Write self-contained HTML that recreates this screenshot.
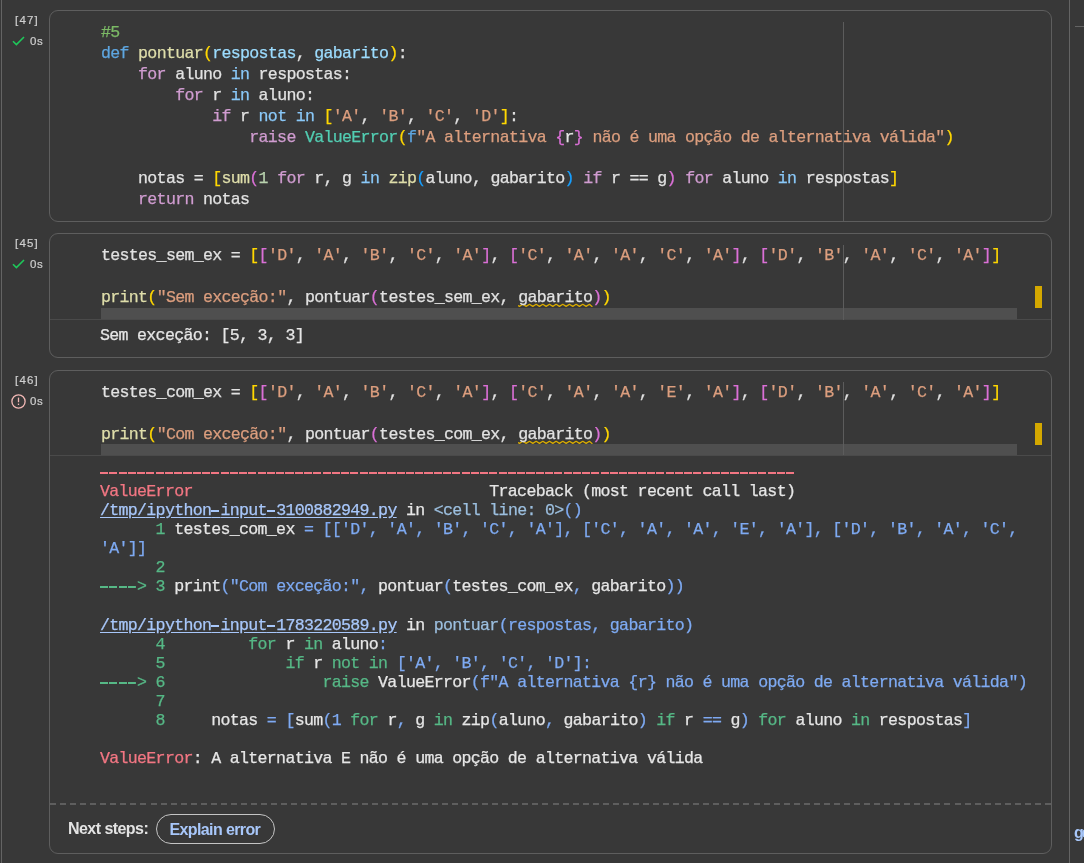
<!DOCTYPE html>
<html><head><meta charset="utf-8">
<style>
html,body{margin:0;padding:0}
body{width:1084px;height:863px;overflow:hidden;background:#383838;position:relative;font-family:"Liberation Sans",sans-serif}
.ab{position:absolute}
#root{position:absolute;left:0;top:0;width:1084px;height:863px;will-change:transform}
.vl{position:absolute;top:0;width:1px;height:863px;background:#646464}
.cell{position:absolute;left:49px;width:1001px;border:1px solid #5e5e5e;border-radius:9px;box-sizing:content-box}
.cnt{position:absolute;left:15px;font-size:11.5px;color:#cfcfcf;letter-spacing:1.2px;-webkit-text-stroke:0.2px currentColor}
.tm{position:absolute;left:30px;font-size:11.5px;color:#cfcfcf;letter-spacing:0.5px;-webkit-text-stroke:0.2px currentColor}
.code{position:absolute;left:101px;font-family:"Liberation Mono",monospace;font-size:16.6px;letter-spacing:-0.689px;line-height:20.97px;-webkit-text-stroke:0.25px currentColor;white-space:pre;color:#e2e2e2;z-index:2}
.out{position:absolute;left:100px;font-family:"Liberation Mono",monospace;font-size:16.6px;letter-spacing:-0.689px;line-height:19.06px;-webkit-text-stroke:0.25px currentColor;white-space:pre;color:#e6e6e6}
.ruler{position:absolute;left:843px;width:1px;background:#5c5c5c;z-index:3}
.sb{position:absolute;left:101px;width:916px;height:11px;background:#4f4f4f}
.mk{position:absolute;left:1035px;width:7px;background:#d4a800}
.sep{position:absolute;left:50px;width:1001px;height:1px;background:#4a4a4a}
/* code colors */
.k{color:#5ea6e0}.o{color:#8ac8f8}.p{color:#d09cd0}.f{color:#dfdeaa}.v{color:#9cdcfe}.c{color:#7cba66}.s{color:#dc9e7e}.t{color:#52cdb2}.n{color:#b9d3ae}
.b1{color:#ffd700}.b2{color:#da70d6}.b3{color:#179fff}
.sq{text-decoration:underline wavy #d4a800;text-decoration-thickness:1px;text-underline-offset:3px}
/* output colors */
.hy{color:transparent;-webkit-text-stroke:0;background-repeat:no-repeat;background-size:8.1px 2px;background-position:0 9px}.h4{background-size:35.9px 2px}
.hg{background-image:repeating-linear-gradient(90deg,#56b886 0 8.1px,transparent 8.1px 9.271px)}
.hb{background-image:repeating-linear-gradient(90deg,#a8c7fa 0 8.1px,transparent 8.1px 9.271px)}
.r{color:#f27683}.g{color:#56b886}.u{color:#a8c7fa;text-decoration:underline;text-underline-offset:2px}.bl{color:#7eaaf2}.cy{color:#9cbfdf}.w{color:#e3e3e3}
</style></head><body><div id="root">
<div class="vl" style="left:1px"></div>
<div class="vl" style="left:1069px"></div>
<div class="ab" style="left:1075px;top:26px;width:9px;height:1px;background:#646464"></div>

<!-- gutter -->
<div class="cnt" style="top:14px">[47]</div>
<svg class="ab" style="left:12px;top:36px" width="13" height="10" viewBox="0 0 13 10"><path d="M1 5.2 L4.4 8.6 L12 1" fill="none" stroke="#1ec85a" stroke-width="1.6"/></svg>
<div class="tm" style="top:35px">0s</div>

<div class="cnt" style="top:237px">[45]</div>
<svg class="ab" style="left:12px;top:259px" width="13" height="10" viewBox="0 0 13 10"><path d="M1 5.2 L4.4 8.6 L12 1" fill="none" stroke="#1ec85a" stroke-width="1.6"/></svg>
<div class="tm" style="top:258px">0s</div>

<div class="cnt" style="top:374px">[46]</div>
<svg class="ab" style="left:11px;top:394px" width="15" height="15" viewBox="0 0 15 15"><circle cx="7.5" cy="7.5" r="6.6" fill="none" stroke="#f2b8b5" stroke-width="1.3"/><rect x="6.85" y="3.6" width="1.3" height="4.6" fill="#f2b8b5"/><rect x="6.85" y="9.6" width="1.3" height="1.4" fill="#f2b8b5"/></svg>
<div class="tm" style="top:395px">0s</div>

<!-- cell 1 -->
<div class="cell" style="top:10px;height:210px"></div>
<div class="ruler" style="top:22px;height:199px"></div>
<div class="code" style="top:23px;line-height:20.9px"><span class="c">#5</span>
<span class="k">def</span> <span class="f">pontuar</span><span class="b1">(</span><span class="v">respostas</span>, <span class="v">gabarito</span><span class="b1">)</span>:
    <span class="p">for</span> aluno <span class="o">in</span> respostas:
        <span class="p">for</span> r <span class="o">in</span> aluno:
            <span class="p">if</span> r <span class="o">not</span> <span class="o">in</span> <span class="b1">[</span><span class="s">'A'</span>, <span class="s">'B'</span>, <span class="s">'C'</span>, <span class="s">'D'</span><span class="b1">]</span>:
                <span class="p">raise</span> <span class="t">ValueError</span><span class="b1">(</span><span class="k">f</span><span class="s">"A alternativa </span><span class="b2">{</span>r<span class="b2">}</span><span class="s"> não é uma opção de alternativa válida"</span><span class="b1">)</span>

    notas = <span class="b1">[</span><span class="f">sum</span><span class="b2">(</span><span class="n">1</span> <span class="p">for</span> r, g <span class="o">in</span> <span class="f">zip</span><span class="b3">(</span>aluno, gabarito<span class="b3">)</span> <span class="p">if</span> r == g<span class="b2">)</span> <span class="p">for</span> aluno <span class="o">in</span> respostas<span class="b1">]</span>
    <span class="p">return</span> notas</div>

<!-- cell 2 -->
<div class="cell" style="top:233px;height:123px"></div>
<div class="ruler" style="top:245px;height:75px"></div>
<div class="code" style="top:246px">testes_sem_ex = <span class="b1">[</span><span class="b2">[</span><span class="s">'D'</span>, <span class="s">'A'</span>, <span class="s">'B'</span>, <span class="s">'C'</span>, <span class="s">'A'</span><span class="b2">]</span>, <span class="b2">[</span><span class="s">'C'</span>, <span class="s">'A'</span>, <span class="s">'A'</span>, <span class="s">'C'</span>, <span class="s">'A'</span><span class="b2">]</span>, <span class="b2">[</span><span class="s">'D'</span>, <span class="s">'B'</span>, <span class="s">'A'</span>, <span class="s">'C'</span>, <span class="s">'A'</span><span class="b2">]</span><span class="b1">]</span>

<span class="f">print</span><span class="b1">(</span><span class="s">"Sem exceção:"</span>, pontuar<span class="b2">(</span>testes_sem_ex, gabarito<span class="b2">)</span><span class="b1">)</span></div>
<div class="sb" style="top:308px"></div>
<svg class="ab" style="left:518px;top:303px;z-index:1" width="75" height="5" viewBox="0 0 75 5"><path d="M0,2.6 L1.5,3.4 L4.83,1.3 L8.16,3.4 L11.49,1.3 L14.82,3.4 L18.15,1.3 L21.48,3.4 L24.81,1.3 L28.14,3.4 L31.47,1.3 L34.8,3.4 L38.13,1.3 L41.46,3.4 L44.79,1.3 L48.12,3.4 L51.45,1.3 L54.78,3.4 L58.11,1.3 L61.44,3.4 L64.77,1.3 L68.1,3.4 L71.43,1.3 L74,3.4" fill="none" stroke="#d9ab00" stroke-width="1.3" stroke-linejoin="round" stroke-linecap="round"/></svg>
<div class="mk" style="top:286px;height:22px"></div>
<div class="sep" style="top:319px"></div>
<div class="out" style="top:326px">Sem exceção: [5, 3, 3]</div>

<!-- cell 3 -->
<div class="cell" style="top:370px;height:482px"></div>
<div class="ruler" style="top:382px;height:73px"></div>
<div class="code" style="top:383px">testes_com_ex = <span class="b1">[</span><span class="b2">[</span><span class="s">'D'</span>, <span class="s">'A'</span>, <span class="s">'B'</span>, <span class="s">'C'</span>, <span class="s">'A'</span><span class="b2">]</span>, <span class="b2">[</span><span class="s">'C'</span>, <span class="s">'A'</span>, <span class="s">'A'</span>, <span class="s">'E'</span>, <span class="s">'A'</span><span class="b2">]</span>, <span class="b2">[</span><span class="s">'D'</span>, <span class="s">'B'</span>, <span class="s">'A'</span>, <span class="s">'C'</span>, <span class="s">'A'</span><span class="b2">]</span><span class="b1">]</span>

<span class="f">print</span><span class="b1">(</span><span class="s">"Com exceção:"</span>, pontuar<span class="b2">(</span>testes_com_ex, gabarito<span class="b2">)</span><span class="b1">)</span></div>
<div class="sb" style="top:444px"></div>
<svg class="ab" style="left:518px;top:440px;z-index:1" width="75" height="5" viewBox="0 0 75 5"><path d="M0,2.6 L1.5,3.4 L4.83,1.3 L8.16,3.4 L11.49,1.3 L14.82,3.4 L18.15,1.3 L21.48,3.4 L24.81,1.3 L28.14,3.4 L31.47,1.3 L34.8,3.4 L38.13,1.3 L41.46,3.4 L44.79,1.3 L48.12,3.4 L51.45,1.3 L54.78,3.4 L58.11,1.3 L61.44,3.4 L64.77,1.3 L68.1,3.4 L71.43,1.3 L74,3.4" fill="none" stroke="#d9ab00" stroke-width="1.3" stroke-linejoin="round" stroke-linecap="round"/></svg>
<div class="mk" style="top:423px;height:22px"></div>
<div class="sep" style="top:455px"></div>

<div class="ab" style="left:100px;top:472px;width:695px;height:2px;background:repeating-linear-gradient(90deg,#f27683 0 8.1px,transparent 8.1px 9.271px)"></div>
<div class="out" style="top:463px">
<span class="r">ValueError</span>                                Traceback (most recent call last)
<span class="u">/tmp/ipython<span class="hy hb">-</span>input<span class="hy hb">-</span>3100882949.py</span> in <span class="cy">&lt;cell line: 0&gt;</span><span class="bl">()</span>
<span class="g">      1</span> testes_com_ex <span class="bl">= [['D', 'A', 'B', 'C', 'A'], ['C', 'A', 'A', 'E', 'A'], ['D', 'B', 'A', 'C', </span>
<span class="bl">'A']]</span>
<span class="g">      2</span>
<span class="g"><span class="hy hg h4">----</span>&gt; 3</span> print<span class="bl">("Com exceção:", </span>pontuar<span class="bl">(</span>testes_com_ex<span class="bl">, </span>gabarito<span class="bl">))</span>

<span class="u">/tmp/ipython<span class="hy hb">-</span>input<span class="hy hb">-</span>1783220589.py</span> in <span class="cy">pontuar</span><span class="bl">(respostas, gabarito)</span>
<span class="g">      4</span>         <span class="g">for</span> r <span class="g">in</span> aluno<span class="bl">:</span>
<span class="g">      5</span>             <span class="g">if</span> r <span class="g">not</span> <span class="g">in</span> <span class="bl">['A', 'B', 'C', 'D']:</span>
<span class="g"><span class="hy hg h4">----</span>&gt; 6</span>                 <span class="g">raise</span> ValueError<span class="bl">(f"A alternativa {r} não é uma opção de alternativa válida")</span>
<span class="g">      7</span>
<span class="g">      8</span>     notas <span class="bl">= [</span>sum<span class="bl">(1</span> <span class="g">for</span> r<span class="bl">,</span> g <span class="g">in</span> zip<span class="bl">(</span>aluno<span class="bl">,</span> gabarito<span class="bl">)</span> <span class="g">if</span> r <span class="bl">==</span> g<span class="bl">)</span> <span class="g">for</span> aluno <span class="g">in</span> respostas<span class="bl">]</span>

<span class="r">ValueError</span>: A alternativa E não é uma opção de alternativa válida</div>

<div class="ab" style="left:50px;top:803px;width:1001px;height:2px;background:repeating-linear-gradient(90deg,#5e5e5e 0 6px,transparent 6px 10.0505px)"></div>
<div class="ab" style="left:68px;top:820px;font-size:16px;letter-spacing:-0.55px;font-weight:bold;color:#e3e3e3">Next steps:</div>
<div class="ab" style="left:156px;top:814px;width:117px;height:28px;border:1px solid #c4c4c4;border-radius:15px"></div>
<div class="ab" style="left:169.5px;top:821px;font-size:16px;letter-spacing:-0.62px;font-weight:bold;color:#a8c7fa">Explain error</div>
<div class="ab" style="left:1074px;top:824px;font-size:16px;letter-spacing:-2.2px;font-weight:bold;color:#a8c7fa">ge</div>
</div></body></html>
